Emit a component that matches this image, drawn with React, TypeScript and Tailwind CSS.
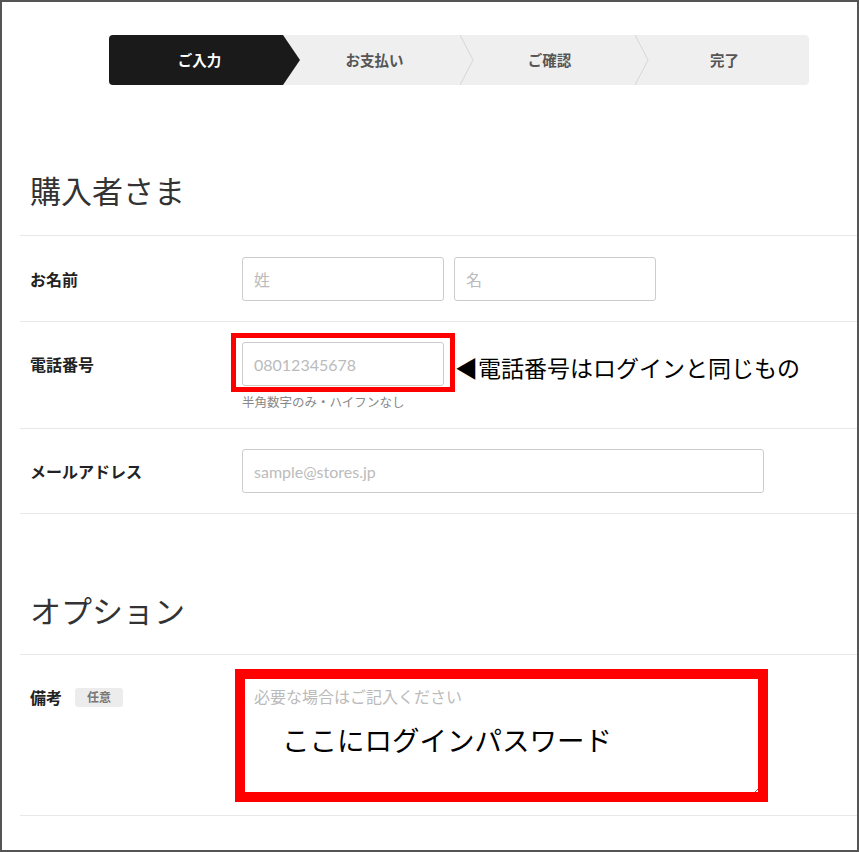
import React from 'react';

const STEPS = ['ご入力', 'お支払い', 'ご確認', '完了'];

const FONT = '[font-family:"Noto_Sans_CJK_JP",sans-serif]';

const Stepper: React.FC = () => (
  <div className="relative ml-[89px] h-[50px] w-[700px] overflow-hidden rounded-[4px] bg-[#efefef]">
    <svg className="absolute inset-0" width="700" height="50" viewBox="0 0 700 50">
      <polygon points="0,0 174,0 191,25 174,50 0,50" fill="#1a1a1a" />
      <polyline points="351,0 364,25 351,50" fill="none" stroke="#d6d6d6" strokeWidth="1" />
      <polyline points="526,0 539,25 526,50" fill="none" stroke="#d6d6d6" strokeWidth="1" />
    </svg>
    <div className="relative flex h-full">
      {STEPS.map((s, i) => (
        <div
          key={s}
          className={`flex w-[175px] items-center justify-center pl-[6px] text-[14.5px] font-bold ${
            i === 0 ? 'text-white' : 'text-[#555]'
          }`}
        >
          {s}
        </div>
      ))}
    </div>
  </div>
);

const inputCls =
  'h-[44px] rounded-[3px] border border-[#cccccc] bg-white px-[11px] text-[16px] text-[#333] outline-none placeholder:text-[#bbbbbb] [font-family:"Lato","Noto_Sans_CJK_JP",sans-serif]';

const Label: React.FC<{ children: React.ReactNode }> = ({ children }) => (
  <div className="flex h-[44px] w-[212px] shrink-0 items-center text-[16px] font-bold text-[#222]">
    {children}
  </div>
);

const App: React.FC = () => {
  return (
    <div className={`box-border h-[852px] w-[859px] overflow-hidden border-2 border-[#555] bg-white ${FONT}`}>
      <div className="ml-[18px] pt-[33px]">
        <Stepper />

        <div className="mt-[85px] border-b border-[#e8e8e8] pb-[25px] pl-[10px]">
          <h2 className="text-[31px] leading-[40px] font-normal text-[#333]">購入者さま</h2>
        </div>

        {/* name */}
        <div className="flex border-b border-[#e8e8e8] pt-[21px] pb-[20px] pl-[10px]">
          <Label>お名前</Label>
          <div className="flex gap-[10px]">
            <input className={`${inputCls} w-[202px]`} placeholder="姓" />
            <input className={`${inputCls} w-[202px]`} placeholder="名" />
          </div>
        </div>

        {/* phone */}
        <div className="flex border-b border-[#e8e8e8] pt-[20px] pb-[17px] pl-[10px]">
          <Label>電話番号</Label>
          <div className="flex flex-col">
            <div className="flex items-center">
              <div className="relative">
                <input className={`${inputCls} w-[202px]`} placeholder="08012345678" />
                <div className="pointer-events-none absolute top-[-9px] left-[-11px] h-[59px] w-[224px] border-[5px] border-[#ff0000]" />
              </div>
              <span className="ml-[11px] pt-[6px] text-[23px] leading-[32px] text-black">◀電話番号はログインと同じもの</span>
            </div>
            <p className="mt-[7px] text-[12.5px] leading-[18px] text-[#888]">半角数字のみ・ハイフンなし</p>
          </div>
        </div>

        {/* email */}
        <div className="flex border-b border-[#e8e8e8] pt-[20px] pb-[20px] pl-[10px]">
          <Label>メールアドレス</Label>
          <input className={`${inputCls} w-[522px]`} placeholder="sample@stores.jp" />
        </div>

        <div className="mt-[76px] border-b border-[#e8e8e8] pb-[24px] pl-[10px]">
          <h2 className="text-[31px] leading-[40px] font-normal text-[#333]">オプション</h2>
        </div>

        {/* note */}
        <div className="flex border-b border-[#e8e8e8] pt-[20px] pb-[21px] pl-[10px]">
          <Label>
            備考
            <span className="ml-[13px] flex h-[19px] items-center rounded-[3px] bg-[#ececec] px-[12px] text-[12px] font-bold text-[#777]">
              任意
            </span>
          </Label>
          <div className="relative">
            <textarea
              className={`${inputCls} block h-[119px] w-[522px] resize-y pt-[10px] leading-[22px]`}
              placeholder="必要な場合はご記入ください"
            />
            <span className="pointer-events-none absolute top-[46px] left-[40px] text-[27.5px] leading-[36px] text-black">
              ここにログインパスワード
            </span>
            <div className="pointer-events-none absolute top-[-6px] left-[-7px] h-[133px] w-[533px] border-[10px] border-[#ff0000]" />
          </div>
        </div>
      </div>
    </div>
  );
};

export default App;
